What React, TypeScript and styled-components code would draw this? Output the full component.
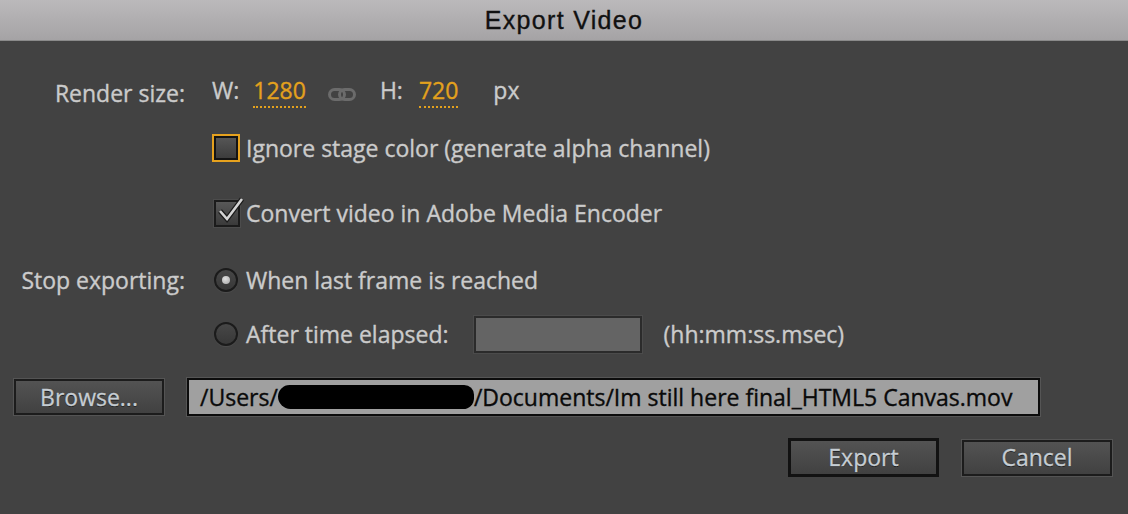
import React from "react";
import styled, { createGlobalStyle } from "styled-components";

const Global = createGlobalStyle`
  html, body { margin: 0; padding: 0; background: #424242; }
  body { width: 1128px; height: 514px; overflow: hidden; }
  * { box-sizing: border-box; }
`;

const Dialog = styled.div`
  width: 1128px;
  height: 514px;
  background: #424242;
  display: flex;
  flex-direction: column;
  font-family: "Open Sans", "DejaVu Sans", sans-serif;
  font-size: 23px;
  color: #cbcbcb;
  -webkit-text-stroke: 0.35px currentColor;
`;

const TitleBar = styled.div`
  height: 41px;
  flex: none;
  display: flex;
  align-items: center;
  justify-content: center;
  background: linear-gradient(#bbb9bb, #a5a3a5);
  border-bottom: 1px solid #8a8a8a;
  font-family: "Liberation Sans", Arial, sans-serif;
  font-size: 25px;
  letter-spacing: 1.3px;
  color: #111;
`;

const Form = styled.div`
  display: flex;
  flex-direction: column;
  padding: 0 16px 0 14px;
`;

const Row = styled.div<{ $mt: number; $h?: number }>`
  display: grid;
  grid-template-columns: 171px 1fr;
  column-gap: 27px;
  align-items: center;
  height: ${(p) => p.$h ?? 40}px;
  margin-top: ${(p) => p.$mt}px;
`;

const Label = styled.div`
  text-align: right;
  line-height: 1;
  white-space: nowrap;
`;

const Content = styled.div<{ $baseline?: boolean }>`
  display: flex;
  align-items: ${(p) => (p.$baseline ? "baseline" : "center")};
  line-height: 1;
`;

const Text = styled.span<{ $ml?: number }>`
  margin-left: ${(p) => p.$ml ?? 0}px;
  white-space: nowrap;
`;

const Value = styled.span<{ $ml?: number }>`
  margin-left: ${(p) => p.$ml ?? 0}px;
  color: #e3a11d;
  border-bottom: 2px dotted #e3a11d;
  padding-bottom: 4px;
`;

const LinkIcon = styled.svg<{ $ml?: number }>`
  margin-left: ${(p) => p.$ml ?? 0}px;
  align-self: center;
  flex: none;
  position: relative;
  top: 1px;
`;

const Box = styled.span<{ $focused?: boolean; $ml?: number }>`
  position: relative;
  flex: none;
  display: inline-block;
  margin-left: ${(p) => p.$ml ?? 0}px;
  width: ${(p) => (p.$focused ? 28 : 26)}px;
  height: ${(p) => (p.$focused ? 28 : 27)}px;
  border: 2px solid ${(p) => (p.$focused ? "#e6a21e" : "#1b1b1b")};
  box-shadow: ${(p) =>
    p.$focused ? "inset 0 0 0 2px #141414" : "0 0 0 1px #4c4c4c"};
  background: linear-gradient(#585858, #3a3a3a);
`;

const Check = styled.svg`
  position: absolute;
  left: 1px;
  top: -7px;
`;

const Radio = styled.span<{ $ml?: number }>`
  flex: none;
  margin-left: ${(p) => p.$ml ?? 0}px;
  width: 24px;
  height: 24px;
  border-radius: 50%;
  border: 2px solid #1b1b1b;
  background: linear-gradient(#474747, #383838);
  box-shadow: 0 1px 0 #4d4d4d;
  display: flex;
  align-items: center;
  justify-content: center;
`;

const Dot = styled.span`
  width: 8px;
  height: 8px;
  border-radius: 50%;
  background: radial-gradient(circle at 40% 35%, #e0e0e0, #a8a8a8);
`;

const TimeInput = styled.span<{ $ml?: number }>`
  flex: none;
  margin-left: ${(p) => p.$ml ?? 0}px;
  width: 168px;
  height: 37px;
  background: #646464;
  border: 2px solid #2b2b2b;
  box-shadow: 0 0 0 1px #4b4b4b;
`;

const ActionRow = styled.div<{ $mt: number; $h: number; $end?: boolean }>`
  display: flex;
  align-items: center;
  justify-content: ${(p) => (p.$end ? "flex-end" : "flex-start")};
  gap: 23px;
  height: ${(p) => p.$h}px;
  margin-top: ${(p) => p.$mt}px;
`;

const Button = styled.button<{ $default?: boolean; $w: number }>`
  flex: none;
  width: ${(p) => p.$w}px;
  height: ${(p) => (p.$default ? 39 : 36)}px;
  padding: 0;
  font-family: "Open Sans", "DejaVu Sans", sans-serif;
  font-size: 23px;
  line-height: 1;
  color: #c6cdd3;
  -webkit-text-stroke: 0.35px currentColor;
  text-shadow: 0 1px 0 #1a1a1a, 0 0 1px #222;
  background: linear-gradient(#535353, #414141);
  border: ${(p) => (p.$default ? "3px solid #121212" : "2px solid #1c1c1c")};
  box-shadow: ${(p) => (p.$default ? "none" : "0 0 0 1px #545454")};
  border-radius: 0;
`;

const PathField = styled.div`
  flex: none;
  width: 853px;
  height: 38px;
  background: #a0a0a0;
  border: 2px solid #0c0c0c;
  box-shadow: 0 0 0 1px #555;
  display: flex;
  align-items: center;
  padding-left: 11px;
  color: #0a0a0a;
  white-space: nowrap;
  line-height: 1;
`;

const Redacted = styled.span`
  display: inline-block;
  width: 196px;
  height: 24px;
  background: #000;
  border-radius: 13px 11px 12px 14px;
  flex: none;
`;

export default function App() {
  return (
    <Dialog>
      <Global />
      <TitleBar>Export Video</TitleBar>
      <Form>
        <Row $mt={32}>
          <Label>Render size:</Label>
          <Content $baseline>
            <Text>W:</Text>
            <Value $ml={14}>1280</Value>
            <LinkIcon $ml={22} width="28" height="13" viewBox="0 0 28 13">
              <rect x="1.5" y="1.5" width="15" height="10" rx="5" fill="none" stroke="#6b6b6b" strokeWidth="3" />
              <rect x="11.5" y="1.5" width="15" height="10" rx="5" fill="none" stroke="#6b6b6b" strokeWidth="3" />
            </LinkIcon>
            <Text $ml={24}>H:</Text>
            <Value $ml={16}>720</Value>
            <Text $ml={35}>px</Text>
          </Content>
        </Row>
        <Row $mt={15}>
          <span />
          <Content>
            <Box $focused />
            <Text $ml={6}>Ignore stage color (generate alpha channel)</Text>
          </Content>
        </Row>
        <Row $mt={25}>
          <span />
          <Content>
            <Box $ml={2}>
              <Check width="28" height="30" viewBox="0 0 28 30">
                <path d="M3 16 L10 24 L25 4" fill="none" stroke="#1a1a1a" strokeWidth="5" strokeLinejoin="miter" />
                <path d="M3 16 L10 24 L25 4" fill="none" stroke="#d4d4d4" strokeWidth="2.6" strokeLinejoin="miter" />
              </Check>
            </Box>
            <Text $ml={6}>Convert video in Adobe Media Encoder</Text>
          </Content>
        </Row>
        <Row $mt={27}>
          <Label>Stop exporting:</Label>
          <Content>
            <Radio $ml={2}>
              <Dot />
            </Radio>
            <Text $ml={8}>When last frame is reached</Text>
          </Content>
        </Row>
        <Row $mt={14}>
          <span />
          <Content>
            <Radio $ml={2} />
            <Text $ml={8}>After time elapsed:</Text>
            <TimeInput $ml={25} />
            <Text $ml={22}>(hh:mm:ss.msec)</Text>
          </Content>
        </Row>
        <ActionRow $mt={23} $h={40}>
          <Button $w={150}>Browse...</Button>
          <PathField>
            /Users/<Redacted />/Documents/Im still here final_HTML5 Canvas.mov
          </PathField>
        </ActionRow>
        <ActionRow $mt={20} $h={41} $end>
          <Button $default $w={151}>Export</Button>
          <Button $w={150}>Cancel</Button>
        </ActionRow>
      </Form>
    </Dialog>
  );
}
